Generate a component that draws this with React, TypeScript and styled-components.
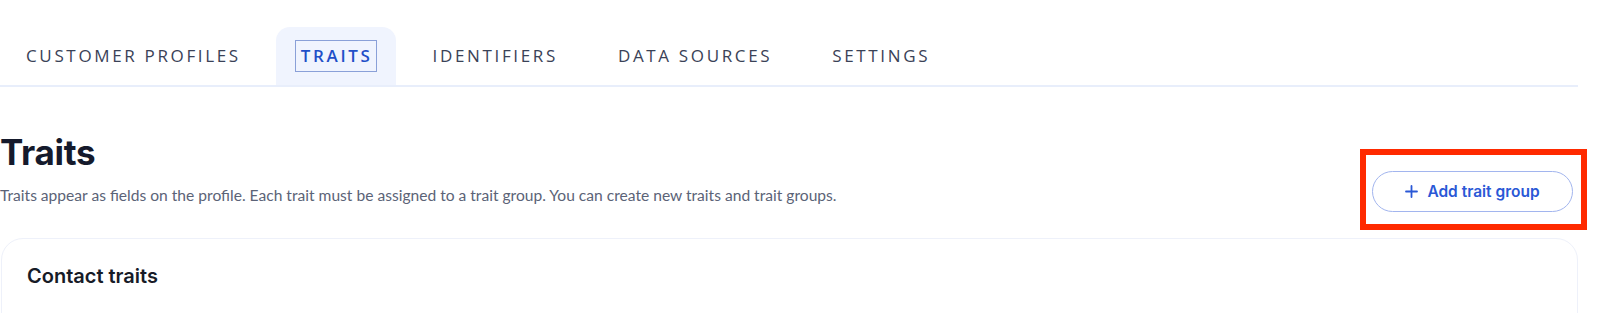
import React from 'react';
import styled, { createGlobalStyle } from 'styled-components';

const GlobalStyle = createGlobalStyle`
  html, body {
    margin: 0;
    padding: 0;
    background: #ffffff;
  }
  body {
    font-family: Inter, "Noto Sans", sans-serif;
    -webkit-font-smoothing: antialiased;
  }
`;

const Page = styled.div`
  width: 1600px;
  height: 313px;
  overflow: hidden;
  padding: 27px 22px 0 0;
  box-sizing: border-box;
`;

const TabBar = styled.nav`
  display: flex;
  gap: 12px;
  padding-left: 1px;
  border-bottom: 2px solid #e8eefb;
`;

const Tab = styled.div<{ $active?: boolean }>`
  height: 58px;
  display: flex;
  align-items: center;
  padding: 0 20px;
  border-radius: 14px 14px 0 0;
  background: ${(p) => (p.$active ? '#f0f4fe' : 'transparent')};
`;

const TabLabel = styled.span<{ $active?: boolean }>`
  font-family: "Open Sans", sans-serif;
  font-size: 17px;
  line-height: 18px;
  font-weight: ${(p) => (p.$active ? 600 : 500)};
  letter-spacing: 2.65px;
  text-transform: uppercase;
  color: ${(p) => (p.$active ? '#1f4fc8' : '#3a4257')};
  outline: ${(p) => (p.$active ? '1px solid #8aa0d8' : 'none')};
  padding: 6px 3px 6px 5px;
`;

const Header = styled.div`
  display: flex;
  justify-content: space-between;
  align-items: flex-start;
  margin-top: 43px;
`;

const TitleBlock = styled.div`
  display: flex;
  flex-direction: column;
`;

const Title = styled.h1`
  margin: 0;
  font-family: Inter, sans-serif;
  font-size: 35px;
  font-weight: 700;
  line-height: 44px;
  color: #151a2c;
  letter-spacing: -0.3px;
`;

const Description = styled.p`
  margin: 11px 0 0;
  font-family: Lato, sans-serif;
  font-size: 15.6px;
  line-height: 20px;
  color: #5b6377;
`;

const Highlight = styled.div`
  border: 6px solid #ff2a00;
  padding: 16px 8px 12px 6px;
  margin: 19px -9px 0 0;
`;

const AddButton = styled.button`
  width: 201px;
  height: 41px;
  border: 1px solid #a2b5ee;
  border-radius: 21px;
  background: #ffffff;
  color: #2a58d6;
  font-family: Inter, sans-serif;
  font-size: 15.5px;
  font-weight: 600;
  display: flex;
  align-items: center;
  justify-content: center;
  gap: 9px;
  cursor: pointer;
`;

const Card = styled.section`
  margin-top: 8px;
  margin-left: 1px;
  border: 1px solid #eef1fa;
  border-radius: 22px;
  padding: 25px 25px;
  height: 200px;
`;

const CardTitle = styled.h2`
  margin: 0;
  font-family: Inter, sans-serif;
  font-size: 20px;
  font-weight: 600;
  color: #171b27;
`;

const tabs = ['Customer profiles', 'Traits', 'Identifiers', 'Data sources', 'Settings'];

export default function App() {
  return (
    <>
      <GlobalStyle />
      <Page>
        <TabBar>
          {tabs.map((t) => (
            <Tab key={t} $active={t === 'Traits'}>
              <TabLabel $active={t === 'Traits'}>{t}</TabLabel>
            </Tab>
          ))}
        </TabBar>
        <Header>
          <TitleBlock>
            <Title>Traits</Title>
            <Description>
              Traits appear as fields on the profile. Each trait must be assigned to a trait group. You can create new traits and trait groups.
            </Description>
          </TitleBlock>
          <Highlight>
            <AddButton>
              <svg width="13" height="13" viewBox="0 0 13 13" fill="none">
                <path d="M6.5 1v11M1 6.5h11" stroke="currentColor" strokeWidth="1.8" strokeLinecap="round" />
              </svg>
              Add trait group
            </AddButton>
          </Highlight>
        </Header>
        <Card>
          <CardTitle>Contact traits</CardTitle>
        </Card>
      </Page>
    </>
  );
}
